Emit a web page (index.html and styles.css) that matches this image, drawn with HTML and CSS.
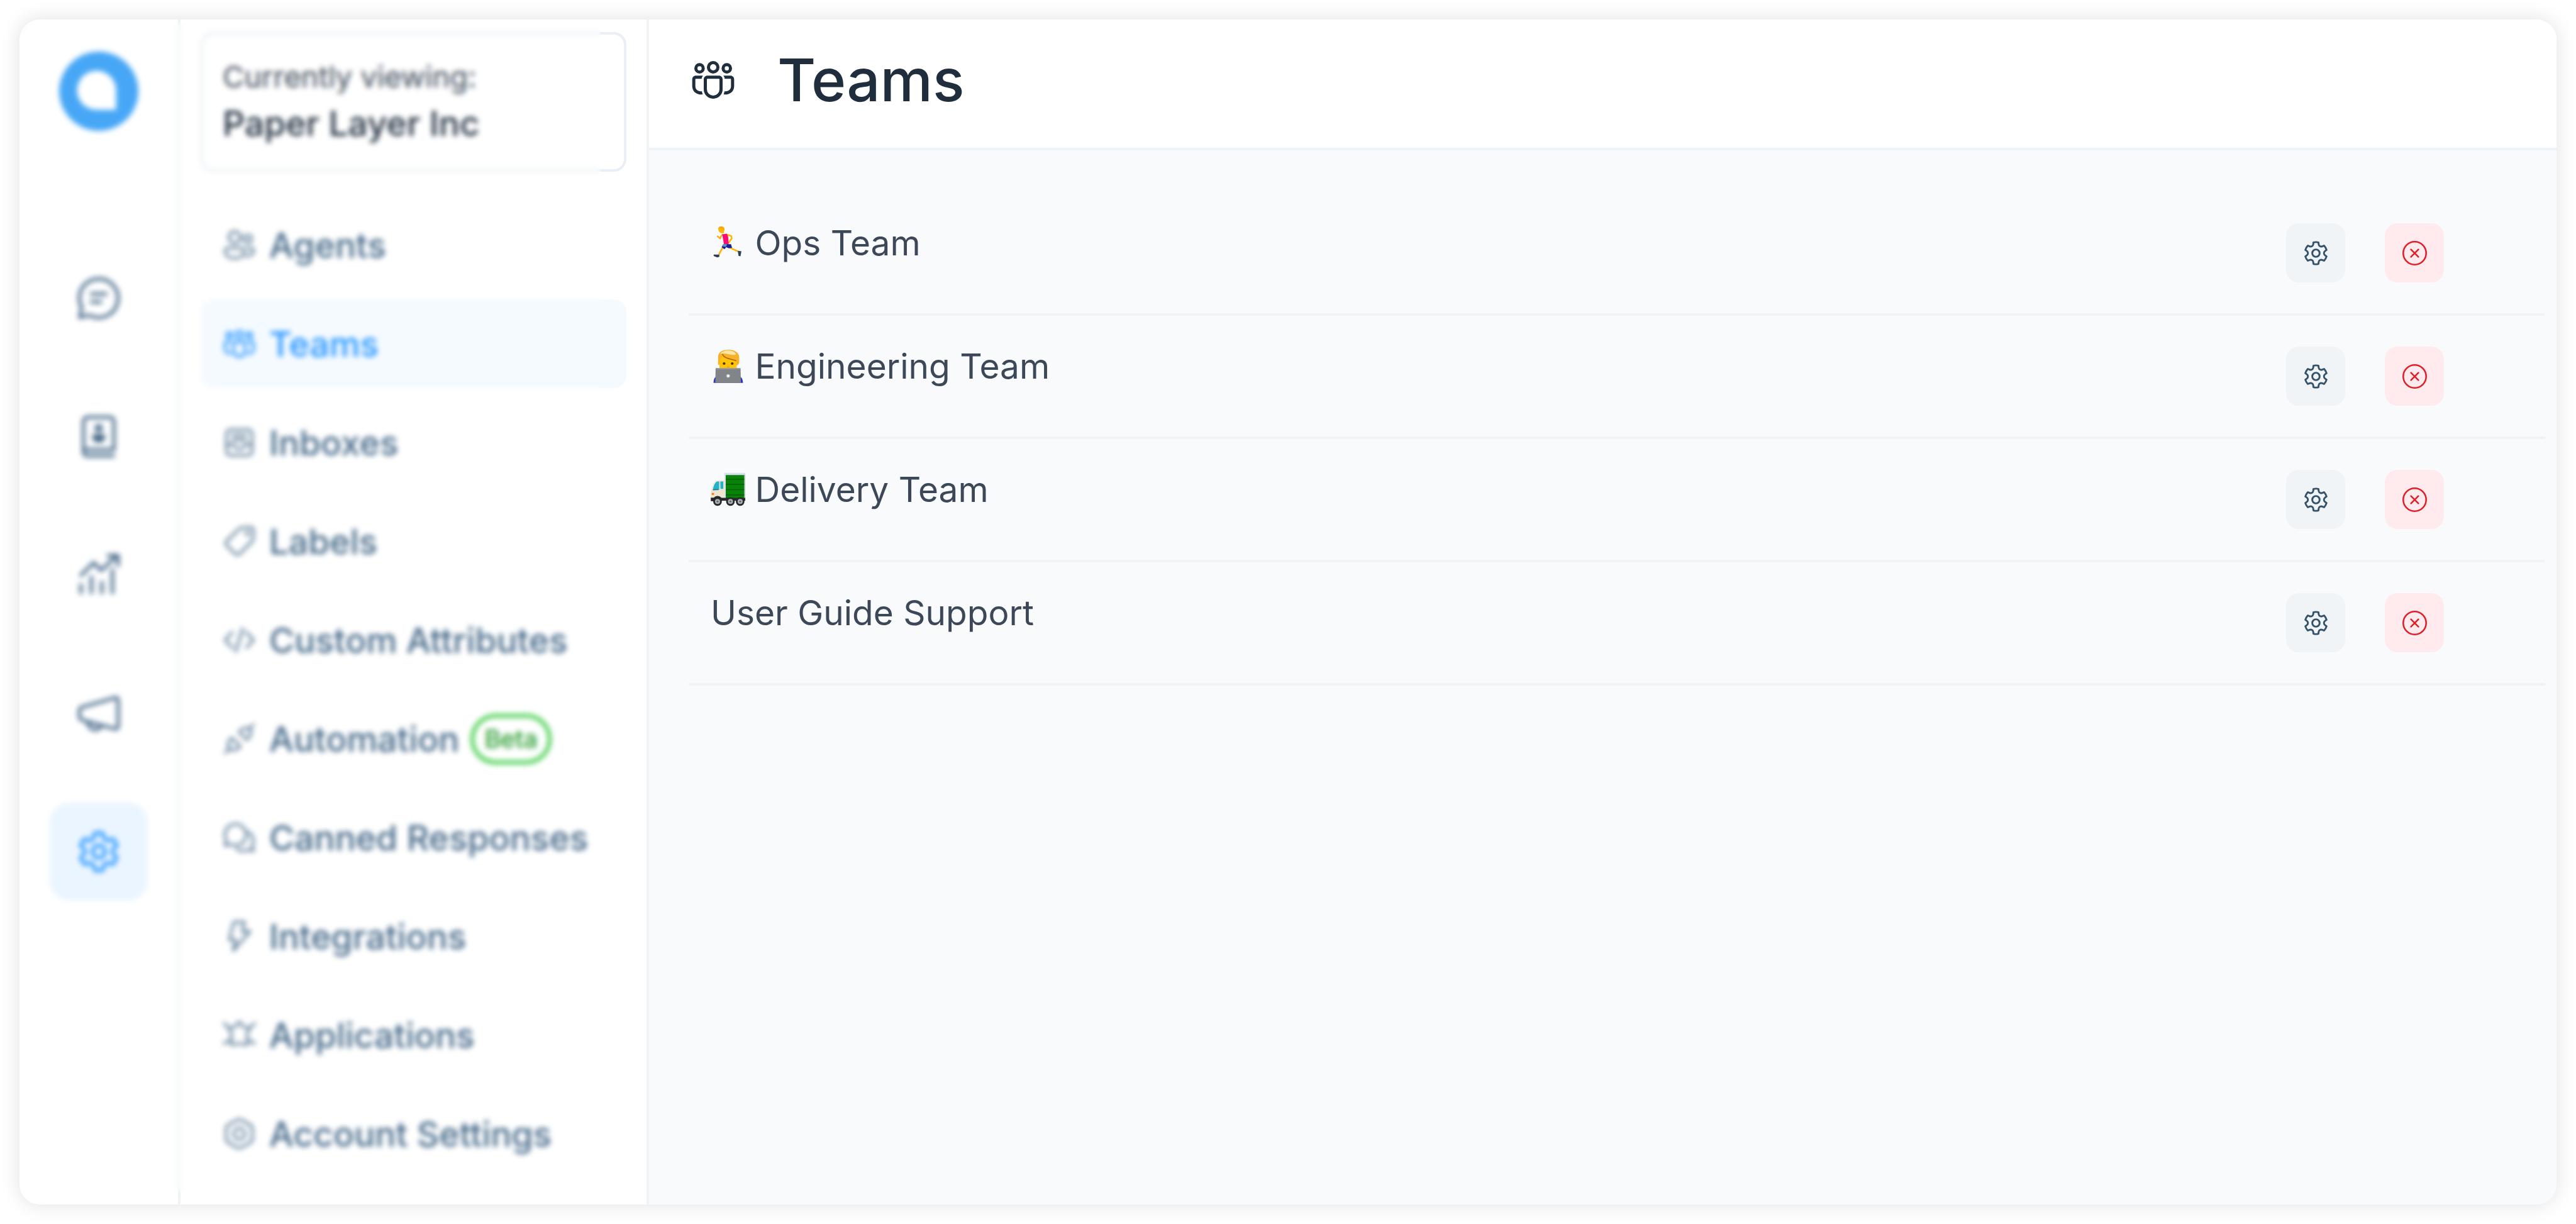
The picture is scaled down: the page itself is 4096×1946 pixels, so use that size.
FILE: index.html
```html
<!DOCTYPE html>
<html lang="en">
<head>
<meta charset="utf-8">
<title>Teams</title>
<link rel="stylesheet" href="styles.css">
</head>
<body>
<svg class="sprite" aria-hidden="true">
  <symbol id="gear" viewBox="0 0 24 24"><path fill="currentColor" d="M12.012 2.25c.734.008 1.465.093 2.182.253a.75.75 0 0 1 .582.649l.17 1.527a1.384 1.384 0 0 0 1.927 1.116l1.401-.615a.75.75 0 0 1 .85.174 9.792 9.792 0 0 1 2.204 3.792.75.75 0 0 1-.271.825l-1.242.916a1.381 1.381 0 0 0 0 2.226l1.243.915a.75.75 0 0 1 .272.826 9.797 9.797 0 0 1-2.204 3.792.75.75 0 0 1-.848.175l-1.407-.617a1.38 1.38 0 0 0-1.926 1.114l-.169 1.526a.75.75 0 0 1-.572.647 9.518 9.518 0 0 1-4.406 0 .75.75 0 0 1-.572-.647l-.168-1.524a1.382 1.382 0 0 0-1.926-1.11l-1.406.616a.75.75 0 0 1-.849-.175 9.798 9.798 0 0 1-2.204-3.796.75.75 0 0 1 .272-.826l1.243-.916a1.38 1.38 0 0 0 0-2.226l-1.243-.914a.75.75 0 0 1-.271-.826 9.793 9.793 0 0 1 2.204-3.792.75.75 0 0 1 .85-.174l1.4.615a1.387 1.387 0 0 0 1.93-1.118l.17-1.526a.75.75 0 0 1 .583-.65c.717-.159 1.45-.243 2.201-.252Zm0 1.5a9.135 9.135 0 0 0-1.354.117l-.109.977A2.886 2.886 0 0 1 6.525 7.17l-.898-.394a8.293 8.293 0 0 0-1.348 2.317l.798.587a2.881 2.881 0 0 1 0 4.643l-.799.588c.32.842.776 1.626 1.348 2.322l.905-.397a2.882 2.882 0 0 1 4.017 2.318l.11.984c.889.15 1.798.15 2.687 0l.11-.984a2.881 2.881 0 0 1 4.018-2.322l.905.396a8.296 8.296 0 0 0 1.347-2.318l-.798-.588a2.881 2.881 0 0 1 0-4.643l.796-.587a8.293 8.293 0 0 0-1.348-2.317l-.896.393a2.884 2.884 0 0 1-4.023-2.324l-.11-.976a8.988 8.988 0 0 0-1.333-.117ZM12 8.25a3.75 3.75 0 1 1 0 7.5 3.75 3.75 0 0 1 0-7.5Zm0 1.5a2.25 2.25 0 1 0 0 4.5 2.25 2.25 0 0 0 0-4.5Z"/></symbol>
  <symbol id="team" viewBox="0 0 24 24"><path fill="currentColor" d="M14.754 10c.966 0 1.75.784 1.75 1.75v4.749a4.501 4.501 0 0 1-9.002 0V11.75c0-.966.783-1.75 1.75-1.75h5.502Zm0 1.5H9.252a.25.25 0 0 0-.25.25v4.749a3.001 3.001 0 0 0 6.002 0V11.75a.25.25 0 0 0-.25-.25ZM3.75 10h3.381a2.738 2.738 0 0 0-.618 1.5H3.75a.25.25 0 0 0-.25.25v3.249a2.501 2.501 0 0 0 3.082 2.433c.085.504.24.985.453 1.432A4.001 4.001 0 0 1 2 15V11.75c0-.966.784-1.75 1.75-1.75Zm13.125 0h3.375c.966 0 1.75.784 1.75 1.75V15a4 4 0 0 1-5.03 3.866c.214-.448.369-.929.455-1.433A2.5 2.5 0 0 0 20.5 15v-3.25a.25.25 0 0 0-.25-.25h-2.757a2.738 2.738 0 0 0-.618-1.5ZM12 3a3 3 0 1 1 0 6 3 3 0 0 1 0-6Zm6.5 1a2.5 2.5 0 1 1 0 5 2.5 2.5 0 0 1 0-5Zm-13 0a2.5 2.5 0 1 1 0 5 2.5 2.5 0 0 1 0-5Zm6.5.5a1.5 1.5 0 1 0 0 3 1.5 1.5 0 0 0 0-3Zm6.5 1a1 1 0 1 0 0 2 1 1 0 0 0 0-2Zm-13 0a1 1 0 1 0 0 2 1 1 0 0 0 0-2Z"/></symbol>
  <symbol id="dismiss" viewBox="0 0 24 24"><g fill="none" stroke="currentColor" stroke-width="1.3" stroke-linecap="round"><circle cx="12" cy="12" r="9.3"/><path d="m9 9 6 6m0-6-6 6"/></g></symbol>
</svg>
<div class="app">
  <div class="navigation">
    <nav class="rail" aria-label="Main">
      <a class="logo" href="#home" aria-label="Home">
        <svg viewBox="0 0 512 512"><circle cx="256" cy="256" r="256" fill="#47a7f6"/><path fill="#fff" d="M368 376H240a126 126 0 1 1 128-126z"/></svg>
      </a>
      <div class="rail-links">
        <a class="rail-link" href="#conversations" aria-label="Conversations"><svg class="stroke" viewBox="0 0 24 24"><path d="M12 2.75a9.25 9.25 0 1 1-4.4 17.4L2.9 21.2l1-4.7A9.25 9.25 0 0 1 12 2.75zM8.5 10h7M8.500 13.8h4.5"/></svg></a>
        <a class="rail-link" href="#contacts" aria-label="Contacts"><svg class="stroke" viewBox="0 0 24 24"><path d="M4.750 19.5V4.750a2 2 0 0 1 2-2h10.500a2 2 0 0 1 2 2V18.200H5.500M4.750 19.500a1.750 1.750 0 0 0 1.750 1.750h12.500"/><circle cx="12" cy="8" r="1.250"/><path fill="currentColor" d="M9.700 11.600h4.600v.6c0 1.300-1 2-2.300 2s-2.300-.7-2.300-2z"/></svg></a>
        <a class="rail-link" href="#reports" aria-label="Reports"><svg class="stroke" viewBox="0 0 24 24"><path d="M3.500 20.500v-3.800m5 3.800V13m5 7.500v-5m5 5V9.500M3.500 12.200l6-6 3.700 3.600 7-6.500M16.500 2.750h4.700v4.700"/></svg></a>
        <a class="rail-link" href="#campaigns" aria-label="Campaigns"><svg class="stroke" viewBox="0 0 24 24"><path d="M21.250 5.700v12.600a1.200 1.200 0 0 1-1.600 1.100L4 15.200a1.700 1.700 0 0 1-1.200-1.600v-2.900c0-.7.500-1.400 1.200-1.600l15.700-4.500a1.200 1.200 0 0 1 1.550 1.100zM6.800 16c0 4.300 5.500 5.200 6.400 1.700"/></svg></a>
        <a class="rail-link active" href="#settings" aria-label="Settings"><svg><use href="#gear"/></svg></a>
      </div>
    </nav>
    <nav class="sidebar" aria-label="Settings">
      <div class="account">
        <span class="account-label">Currently viewing:</span>
        <span class="account-name">Paper Layer Inc</span>
      </div>
      <ul class="menu">
        <li><a href="#agents"><svg class="stroke" viewBox="0 0 24 24"><circle cx="9" cy="7" r="3.700"/><circle cx="17.500" cy="8" r="2.500"/><path d="M4.500 14h9a1.700 1.700 0 0 1 1.700 1.700c0 3-2.200 4.800-6.200 4.800s-6.200-1.800-6.200-4.800A1.700 1.700 0 0 1 4.500 14zM17 14h2.700a1.500 1.500 0 0 1 1.500 1.500c0 2.500-2 3.800-5 3.500"/></svg>Agents</a></li>
        <li><a class="active" href="#teams" aria-current="page"><svg><use href="#team"/></svg>Teams</a></li>
        <li><a href="#inboxes"><svg class="stroke" viewBox="0 0 24 24"><rect x="3.750" y="3.750" width="16.500" height="16.500" rx="2.500"/><path d="M4 13.500h4.500c.5 3.600 6.500 3.600 7 0H20M7.500 7.500h9M7.500 10.500h9"/></svg>Inboxes</a></li>
        <li><a href="#labels"><svg class="stroke" viewBox="0 0 24 24"><path d="M13.500 3.300 19.500 3a1.700 1.700 0 0 1 1.700 1.700l-.3 6a2 2 0 0 1-.6 1.300l-8.100 8.100a2 2 0 0 1-2.900 0L3.900 14.700a2 2 0 0 1 0-2.900L12.200 3.800a2 2 0 0 1 1.300-.5z"/><circle cx="17.200" cy="7" r=".7"/></svg>Labels</a></li>
        <li><a href="#attributes"><svg class="stroke" viewBox="0 0 24 24"><path d="m7.500 7-4.700 5 4.700 5m9-10 4.700 5-4.700 5M14.200 4.500l-4.500 15"/></svg>Custom Attributes</a></li>
        <li><a href="#automation"><svg class="stroke" viewBox="0 0 24 24"><path d="m21.200 2.800-2.700 2.700m-5.700 1.200c1.700-1.700 4-2.400 5.700-.7s1 4-.7 5.700l-.9.900-5-5zM2.800 21.200l2.700-2.700m1.600-7.100 5.500 5.500-.9.900c-1.700 1.700-4.200 2.200-5.900.5s-1.200-4.200.5-5.900z"/></svg>Automation<span class="badge">Beta</span></a></li>
        <li><a href="#canned"><svg class="stroke" viewBox="0 0 24 24"><path d="M9.500 3.300a6.900 6.900 0 1 1-3 13.100l-3.700.8.800-3.600A6.900 6.900 0 0 1 9.500 3.300zM17.800 8.500a6.700 6.700 0 0 1 2.600 8.700l.8 3.500-3.600-.8c-2.500 1.200-5.300.9-7.300-.6"/></svg>Canned Responses</a></li>
        <li><a href="#integrations"><svg class="stroke" viewBox="0 0 24 24"><path d="M8.500 2.800h7l-1.800 6H19L8 21.300l1.700-7H5.500z"/></svg>Integrations</a></li>
        <li><a href="#applications"><svg class="stroke" viewBox="0 0 24 24"><path d="M12 3.500c1 0 1.600 2.500 2.600 3.200s3.400.3 3.800 1.300-1.400 2.500-1.500 3.800.9 5.500.2 6.400-3.400-.7-5.100-.7-4.400 1.600-5.100.7.300-5.100.2-6.400S5.200 9 5.600 8s2.800-.6 3.800-1.300S11 3.500 12 3.500zM2 4.500l3.500 3M22 4.500l-3.500 3M2 17.500l4-2M22 17.500l-4-2"/></svg>Applications</a></li>
        <li><a href="#account"><svg class="stroke" viewBox="0 0 24 24"><path d="M10.500 3.200a3 3 0 0 1 3 0l5.500 3.100a3 3 0 0 1 1.500 2.600v6.200a3 3 0 0 1-1.500 2.600l-5.500 3.100a3 3 0 0 1-3 0L5 17.700a3 3 0 0 1-1.500-2.600V8.900A3 3 0 0 1 5 6.300z"/><circle cx="12" cy="12" r="3.600"/></svg>Account Settings</a></li>
      </ul>
    </nav>
    <div class="veil"></div>
  </div>
  <main class="content">
    <header class="page-header">
      <svg class="title-icon"><use href="#team"/></svg>
      <h1>Teams</h1>
    </header>
    <div class="page-body">
      <table class="teams">
        <tbody>
          <tr>
            <td class="name"><svg class="emoji" viewBox="54 54 252 252" role="img" aria-label="Runner"><path d="M139 118c-9 9-14 19-15 29l-20-17" fill="none" stroke="#fba90a" stroke-width="10" stroke-linejoin="round" stroke-linecap="round"/><path d="m172 118 32 10 3 18-20 30" fill="none" stroke="#ffb800" stroke-width="12" stroke-linejoin="round" stroke-linecap="round"/><path d="m145 205-29 55M196 214l58 27" fill="none" stroke="#ffb300" stroke-width="12" stroke-linecap="round"/><path d="m138 116 34-5 10 26 3 50-34 2z" fill="#fb0b74"/><path d="m146 187 56 1 8 26-24 4-18-8-14 15-20-15z" fill="#1b1d91"/><path d="m146 187 28 1-8 20-25-4z" fill="#5b93cd"/><path d="M130 60c-12 0-19 7-21 18 1 17 13 28 24 30h18v-14c8-10 7-34-21-34z" fill="#ffb708"/><path d="M110 76c10-8 25 0 32-2l4 22c14-18 6-38-16-37-12 0-20 8-20 17z" fill="#f7aa00"/><path d="M76 264h41v16l-15 4-26-10zM252 236l26 4-7 36-14-3z" fill="#2c3d55"/></svg> Ops Team</td>
            <td class="actions"><button type="button" class="edit" aria-label="Settings"><svg><use href="#gear"/></svg></button><button type="button" class="delete" aria-label="Delete"><svg><use href="#dismiss"/></svg></button></td>
          </tr>
          <tr>
            <td class="name"><svg class="emoji" viewBox="54 54 252 252" role="img" aria-label="Technologist"><path d="M75 300c0-26 8-42 20-46h172c14 6 22 22 22 46z" fill="#2c35cf"/><path d="M108 168V112c0-36 34-55 76-53 46 0 76 22 78 54v34c0 14-8 24-18 26z" fill="#f5b22a"/><path d="M118 140c4-10 12-20 20-34 24 20 60 26 105 34v52H118z" fill="#ffc408"/><path d="M124 88c24-34 94-34 116 4-30 16-80-16-116-4z" fill="#ffe6a6"/><path d="M139 90c12 32 50 32 102 50" fill="none" stroke="#b36a08" stroke-width="7"/><ellipse cx="152" cy="159" rx="10" ry="9" fill="#4d3312"/><ellipse cx="211" cy="159" rx="10" ry="9" fill="#4d3312"/><path d="M172 186h18" stroke="#d99100" stroke-width="5"/><path d="M90 198q0-6 6-6h170q6 0 6 6l2 102H88z" fill="#818589"/><path d="M92 196h178" stroke="#a5a8aa" stroke-width="7"/><circle cx="181" cy="249" r="13" fill="#c8cacc"/><circle cx="182" cy="250" r="8" fill="#fff"/></svg> Engineering Team</td>
            <td class="actions"><button type="button" class="edit" aria-label="Settings"><svg><use href="#gear"/></svg></button><button type="button" class="delete" aria-label="Delete"><svg><use href="#dismiss"/></svg></button></td>
          </tr>
          <tr>
            <td class="name"><svg class="emoji" viewBox="54 54 252 252" role="img" aria-label="Truck"><path d="M154 58h152v190H154z" fill="#d9def0"/><path d="M164 74h135v170H164z" fill="#078307"/><path d="M164 104h135M164 142h135M164 180h135M164 218h135" stroke="#075f09" stroke-width="8"/><path d="M302 70v176" stroke="#a6afb7" stroke-width="5"/><path d="M100 112h56v134H56v-46c6-34 18-82 44-88z" fill="#efe6cf"/><path d="M102 120h14v60l-46 5c4-28 14-58 32-65zM124 120h22v54h-20z" fill="#22b2cc"/><path d="M72 176h40l-2 8H70z" fill="#14799a"/><rect x="62" y="204" width="16" height="14" fill="#ff7614"/><path d="M55 238h34l-7 26H55zM130 240h176v20H134z" fill="#26282b"/><path d="M68 264a36 36 0 0 1 72-4z" fill="#26282b"/><g fill="#acb0b5" stroke="#26282b" stroke-width="13"><circle cx="104" cy="266" r="25"/><circle cx="198" cy="266" r="25"/><circle cx="269" cy="266" r="25"/></g><g fill="#606469"><circle cx="104" cy="266" r="7"/><circle cx="198" cy="266" r="7"/><circle cx="269" cy="266" r="7"/></g></svg> Delivery Team</td>
            <td class="actions"><button type="button" class="edit" aria-label="Settings"><svg><use href="#gear"/></svg></button><button type="button" class="delete" aria-label="Delete"><svg><use href="#dismiss"/></svg></button></td>
          </tr>
          <tr>
            <td class="name">User Guide Support</td>
            <td class="actions"><button type="button" class="edit" aria-label="Settings"><svg><use href="#gear"/></svg></button><button type="button" class="delete" aria-label="Delete"><svg><use href="#dismiss"/></svg></button></td>
          </tr>
        </tbody>
      </table>
    </div>
  </main>
</div>
</body>
</html>
```
FILE: styles.css
```css
* { box-sizing: border-box; }
body {
  margin: 0;
  padding: 31px;
  min-height: 100vh;
  display: flex;
  background: #fff;
  font-family: Inter, "Liberation Sans", sans-serif;
  font-size: 55px;
  color: #3c4858;
}
.sprite { position: absolute; width: 0; height: 0; }
svg { display: block; flex: none; }
.stroke {
  fill: none;
  stroke: currentColor;
  stroke-width: 1.5;
  stroke-linecap: round;
  stroke-linejoin: round;
}
a { color: inherit; text-decoration: none; }

.app {
  flex: 1;
  display: flex;
  overflow: hidden;
  border-radius: 32px;
  background: #fff;
  box-shadow: 0 0 32px rgba(0, 0, 0, 0.12);
}
.navigation {
  position: relative;
  display: flex;
  flex: none;
  border-right: 4px solid #f1f4f7;
}
/* Frosted layer that takes the navigation out of focus */
.veil {
  position: absolute;
  inset: 6px 73px 21px 0;
  backdrop-filter: blur(4px);
  pointer-events: none;
}

.rail {
  width: 256px;
  padding-top: 51px;
  display: flex;
  flex-direction: column;
  align-items: center;
  gap: 188px;
  border-right: 4px solid #eff4f7;
}
.logo svg { width: 126px; height: 126px; }
.rail-links { display: flex; flex-direction: column; gap: 64px; }
.rail-link {
  width: 156px;
  height: 156px;
  display: grid;
  place-items: center;
  border-radius: 32px;
  color: #446888;
}
.rail-link svg { width: 80px; height: 80px; }
.rail-link.active { background: #ebf5ff; color: #1f93ff; }

.sidebar { width: 741px; padding: 20px 32px 32px; }
.account {
  display: flex;
  flex-direction: column;
  height: 222px;
  padding: 31px;
  border: 4px solid #e9eff4;
  border-radius: 20px;
}
.account-label { font-size: 47px; line-height: 72px; }
.account-name { font-weight: 500; line-height: 76px; color: #1f2d3d; }
.menu {
  list-style: none;
  margin: 46px 0 0;
  padding: 0;
  display: flex;
  flex-direction: column;
  gap: 16px;
}
.menu a {
  height: 141px;
  padding: 0 32px;
  display: flex;
  align-items: center;
  gap: 18px;
  border-radius: 20px;
  font-weight: 500;
  color: #446888;
}
.menu svg { width: 59px; height: 59px; }
.menu .stroke { stroke-width: 1.3; }
.menu a.active { background: #f5faff; color: #1f93ff; }
.badge {
  padding: 0 16px;
  border: 6px solid #44ce4b;
  border-radius: 42px;
  font-size: 39px;
  line-height: 68px;
  color: #229b29;
}

.content { flex: 1; display: flex; flex-direction: column; background: #f9fafc; }
.page-header {
  display: flex;
  align-items: center;
  gap: 62px;
  padding: 32px 62px 44px;
  border-bottom: 4px solid #f1f4f7;
  background: #fff;
  color: #1f2d3d;
}
.title-icon { width: 80px; height: 80px; }
h1 { margin: 0; font-size: 94px; font-weight: 500; line-height: 128px; }
.page-body { padding: 67px 18px 67px 63px; }
.teams { width: 100%; border-collapse: separate; border-spacing: 0; }
.teams td { height: 196px; padding: 0; border-bottom: 4px solid #f1f4f7; }
.teams .name { padding: 0 35px 32px; }
.emoji { display: inline-block; width: 55px; height: 55px; vertical-align: -8px; }
.teams .actions { width: 412px; padding-right: 161px; }
button {
  width: 94px;
  height: 94px;
  padding: 0;
  border: 0;
  border-radius: 20px;
  display: inline-grid;
  place-items: center;
  vertical-align: middle;
}
button + button { margin-left: 63px; }
button svg { width: 47px; height: 47px; }
.edit { background: #f0f4f7; color: #35526b; }
.delete { background: #ffebed; color: #e11d28; }
```
